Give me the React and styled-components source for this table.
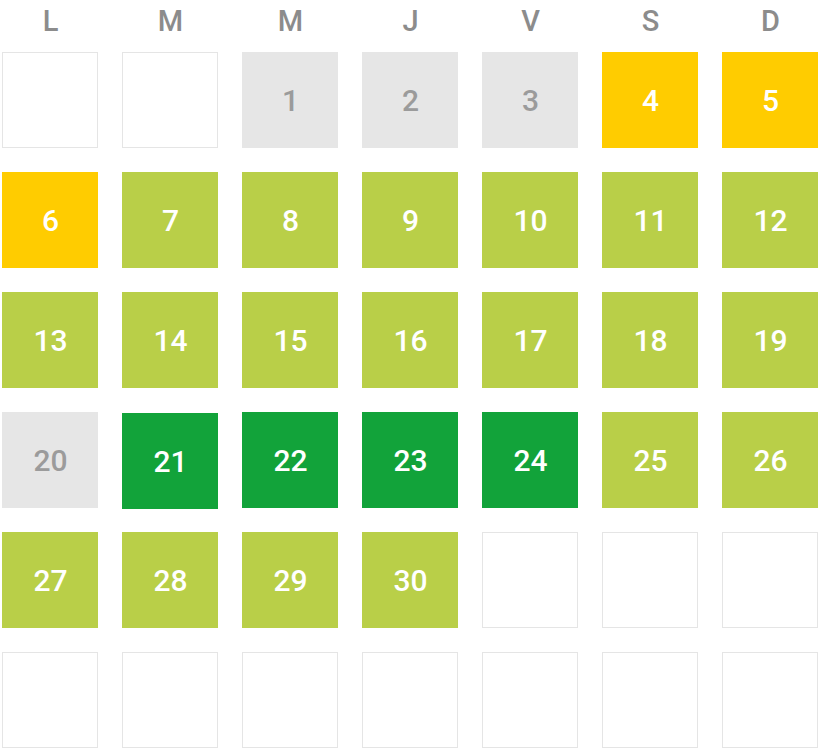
import React from 'react';
import styled, { createGlobalStyle } from 'styled-components';

const GlobalStyle = createGlobalStyle`
  html, body {
    margin: 0;
    padding: 0;
    background: #ffffff;
    font-family: Roboto, "Liberation Sans", sans-serif;
  }
`;

const COLORS = {
  empty: { bg: '#ffffff', fg: 'transparent', border: '#e5e5e5' },
  past: { bg: '#e6e6e6', fg: '#9b9b9b', border: '#e6e6e6' },
  warn: { bg: '#ffcc00', fg: '#ffffff', border: '#ffcc00' },
  ok: { bg: '#b9cf48', fg: '#ffffff', border: '#b9cf48' },
  best: { bg: '#12a33a', fg: '#ffffff', border: '#12a33a' },
};

const Calendar = styled.div`
  width: 816px;
  padding: 0 2px;
`;

const WeekHeader = styled.div`
  display: grid;
  grid-template-columns: repeat(7, 96px);
  column-gap: 24px;
  height: 41px;
  margin-bottom: 11px;
`;

const DayName = styled.div`
  display: flex;
  align-items: center;
  justify-content: center;
  padding-left: 1px;
  font-size: 29px;
  font-weight: 500;
  color: #8c8c8c;
`;

const Grid = styled.div`
  display: grid;
  grid-template-columns: repeat(7, 96px);
  grid-auto-rows: 96px;
  gap: 24px;
`;

const Day = styled.div`
  box-sizing: border-box;
  display: flex;
  align-items: center;
  justify-content: center;
  padding-left: 1px;
  margin: ${p => (p.$today ? '1px 0 -1px' : '0')};
  background: ${p => COLORS[p.$kind].bg};
  color: ${p => COLORS[p.$kind].fg};
  border: 1px solid ${p => COLORS[p.$kind].border};
  font-size: 30px;
  font-weight: 500;
`;

const days = ['L', 'M', 'M', 'J', 'V', 'S', 'D'];

const kindOf = (n) => {
  if (n <= 3 || n === 20) return 'past';
  if (n <= 6) return 'warn';
  if (n >= 21 && n <= 24) return 'best';
  return 'ok';
};

const cells = Array.from({ length: 42 }, (_, i) => {
  const n = i - 1;
  return n >= 1 && n <= 30 ? n : null;
});

export default function App() {
  return (
    <>
      <GlobalStyle />
      <Calendar>
        <WeekHeader>
          {days.map((d, i) => (
            <DayName key={i}>{d}</DayName>
          ))}
        </WeekHeader>
        <Grid>
          {cells.map((n, i) => (
            <Day key={i} $kind={n ? kindOf(n) : 'empty'} $today={n === 21}>
              {n}
            </Day>
          ))}
        </Grid>
      </Calendar>
    </>
  );
}
